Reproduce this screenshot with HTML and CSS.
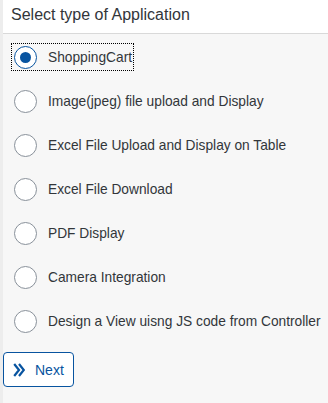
FILE: index.html
```html
<!DOCTYPE html>
<html lang="en">
<head>
    <meta charset="UTF-8">
    <meta name="viewport" content="width=device-width, initial-scale=1.0">
    <title>Select type of Application</title>
    <link rel="stylesheet" href="styles.css">
</head>
<body>
    <div class="shell">
        <div class="header">Select type of Application</div>
        <div class="content">
            <div class="radio-group">
                <div class="radio-item selected focused">
                    <span class="radio"><span class="dot"></span></span>
                    <span class="label">ShoppingCart</span>
                </div>
                <div class="radio-item">
                    <span class="radio"></span>
                    <span class="label">Image(jpeg) file upload and Display</span>
                </div>
                <div class="radio-item">
                    <span class="radio"></span>
                    <span class="label">Excel File Upload and Display on Table</span>
                </div>
                <div class="radio-item">
                    <span class="radio"></span>
                    <span class="label">Excel File Download</span>
                </div>
                <div class="radio-item">
                    <span class="radio"></span>
                    <span class="label">PDF Display</span>
                </div>
                <div class="radio-item">
                    <span class="radio"></span>
                    <span class="label">Camera Integration</span>
                </div>
                <div class="radio-item">
                    <span class="radio"></span>
                    <span class="label">Design a View uisng JS code from Controller</span>
                </div>
            </div>
            <button class="next-btn">
                <svg class="next-icon" width="12" height="14" viewBox="0 0 12 14">
                    <path d="M1.2 1 L6 7 L1.2 13 M6 1 L10.8 7 L6 13" fill="none" stroke="#0854a0" stroke-width="2.2"/>
                </svg>
                <span>Next</span>
            </button>
        </div>
    </div>
</body>
</html>
```

FILE: styles.css
```css
:root {
    --text-color: #32363a;
    --brand: #0854a0;
    --radio-border: #89919a;
    --page-bg: #f7f7f7;
    --strip: #ededed;
}
html, body {
    margin: 0;
    padding: 0;
    height: 100%;
}
body {
    font-family: 'Liberation Sans', Arial, sans-serif;
    background-color: var(--page-bg);
    color: var(--text-color);
}
.shell {
    min-height: 100%;
    border-left: 3px solid var(--strip);
}
.header {
    height: 33px;
    line-height: 30px;
    background-color: #ffffff;
    border-bottom: 1px solid #d9d9d9;
    padding-left: 8px;
    font-size: 16px;
}
.radio-group {
    display: flex;
    flex-direction: column;
    padding-top: 1px;
    padding-left: 8px;
}
.radio-item {
    height: 44px;
    display: flex;
    align-items: center;
}
.radio-item .radio {
    box-sizing: border-box;
    width: 23px;
    height: 23px;
    margin-left: 3px;
    border: 1px solid var(--radio-border);
    border-radius: 50%;
    background-color: #ffffff;
    display: flex;
    align-items: center;
    justify-content: center;
}
.radio-item.selected .radio {
    border-color: var(--brand);
}
.radio-item .dot {
    width: 11px;
    height: 11px;
    border-radius: 50%;
    background-color: var(--brand);
}
.radio-item .label {
    margin-left: 11px;
    font-size: 13.75px;
    color: var(--text-color);
}
.radio-item.focused {
    align-self: flex-start;
    position: relative;
}
.radio-item.focused::after {
    content: "";
    position: absolute;
    left: 0;
    right: -2px;
    top: 8px;
    bottom: 8px;
    border: 1px dotted #000000;
}
.next-btn {
    margin-top: 9px;
    height: 35px;
    width: 71px;
    display: flex;
    align-items: center;
    padding: 0 0 0 9px;
    background-color: #ffffff;
    border: 1px solid var(--brand);
    border-radius: 4px;
    color: var(--brand);
    font-family: 'Liberation Sans', Arial, sans-serif;
    font-size: 14px;
}
.next-icon {
    margin-right: 10px;
}
```
